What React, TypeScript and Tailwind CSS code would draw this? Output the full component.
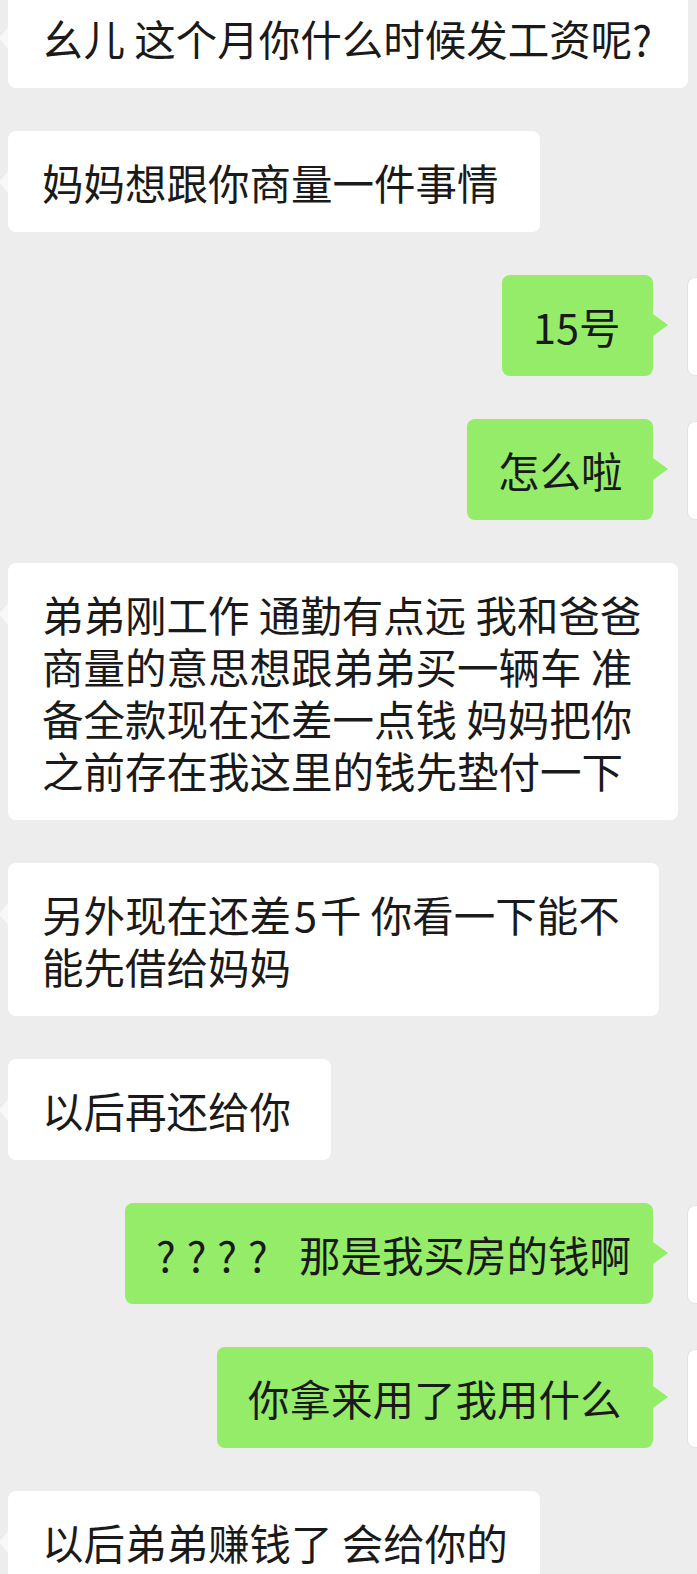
type Msg = {
  side: "left" | "right";
  lines: string[];
  w: string;
};

const messages: Msg[] = [
  { side: "left", lines: ["幺儿 这个月你什么时候发工资呢?"], w: "w-[680px]" },
  { side: "left", lines: ["妈妈想跟你商量一件事情"], w: "w-[532px]" },
  { side: "right", lines: ["15号"], w: "w-[151px]" },
  { side: "right", lines: ["怎么啦"], w: "w-[186px]" },
  {
    side: "left",
    lines: [
      "弟弟刚工作 通勤有点远 我和爸爸",
      "商量的意思想跟弟弟买一辆车 准",
      "备全款现在还差一点钱 妈妈把你",
      "之前存在我这里的钱先垫付一下",
    ],
    w: "w-[670px]",
  },
  {
    side: "left",
    lines: ["另外现在还差5千 你看一下能不", "能先借给妈妈"],
    w: "w-[651px]",
  },
  { side: "left", lines: ["以后再还给你"], w: "w-[323px]" },
  { side: "right", lines: ["???? ", "那是我买房的钱啊"], w: "w-[528px]" },
  { side: "right", lines: ["你拿来用了我用什么"], w: "w-[436px]" },
  { side: "left", lines: ["以后弟弟赚钱了 会给你的"], w: "w-[532px]" },
];

const font = {
  fontFamily: '"Noto Sans CJK SC", "Noto Sans", sans-serif',
};

// "5" sits a bit apart from its neighbours in the screenshot
const renderLine = (l: string) => {
  if (!l.includes("5千")) return l;
  const [a, b] = l.split("5千");
  return (
    <>
      {a}
      <span className="mx-[3px]">5</span>千{b}
    </>
  );
};

const LeftBubble = ({ msg }: { msg: Msg }) => (
  <div className="flex items-start">
    {/* tail */}
    <div className="w-[8px] shrink-0 pt-[40px] flex justify-end">
      <div className="w-0 h-0 border-y-[11px] border-y-transparent border-r-[9px] border-r-[#f8f8f8]" />
    </div>
    <div
      className={`${msg.w} shrink-0 bg-white rounded-lg pl-[34px] py-[24.5px] text-[41.5px] leading-[52px] text-[#1a1a1a] whitespace-pre`}
    >
      {msg.lines.map((l, i) => (
        <div key={i}>{renderLine(l)}</div>
      ))}
    </div>
  </div>
);

const RightBubble = ({ msg }: { msg: Msg }) => {
  const isQ = msg.lines[0].startsWith("????");
  return (
    <div className="flex items-start justify-end">
      <div
        className={`${msg.w} shrink-0 bg-[#95ec69] rounded-lg pl-[31px] py-[24.5px] text-[41.5px] leading-[52px] text-[#1a1a1a] whitespace-pre`}
      >
        {isQ ? (
          <div>
            <span className="tracking-[11px]">{msg.lines[0]}</span>
            {msg.lines[1]}
          </div>
        ) : (
          msg.lines.map((l, i) => <div key={i}>{l}</div>)
        )}
      </div>
      {/* tail */}
      <div className="w-[34px] shrink-0 pt-[39px]">
        <div className="w-0 h-0 border-y-[11px] border-y-transparent border-l-[15px] border-l-[#95ec69]" />
      </div>
      {/* avatar edge */}
      <div className="w-[10px] h-[99px] mt-[2px] shrink-0 bg-white rounded-l-lg border border-r-0 border-[#e2e2e2]" />
    </div>
  );
};

export default function App() {
  return (
    <div
      className="w-[697px] h-[1574px] overflow-hidden bg-[#ededed]"
      style={font}
    >
      <div className="flex flex-col gap-[43px] mt-[-13px]">
        {messages.map((m, i) =>
          m.side === "left" ? (
            <LeftBubble key={i} msg={m} />
          ) : (
            <RightBubble key={i} msg={m} />
          ),
        )}
      </div>
    </div>
  );
}
